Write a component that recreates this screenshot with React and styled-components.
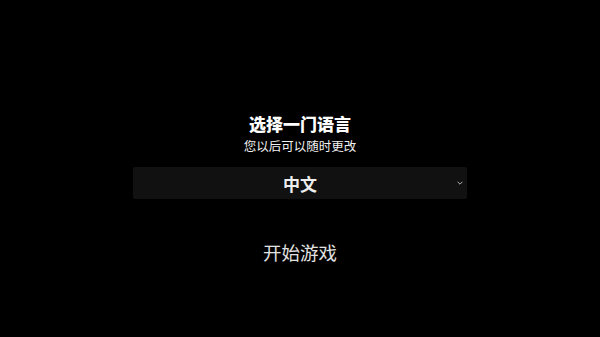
import React from "react";
import styled, { createGlobalStyle } from "styled-components";

const GlobalStyle = createGlobalStyle`
  html, body {
    margin: 0;
    padding: 0;
    background: #000;
    height: 100%;
  }
  body {
    font-family: "Noto Sans CJK SC", "Noto Sans", sans-serif;
    color: #fff;
  }
`;

function App() {
  return (
    <>
      <GlobalStyle />
      <Screen>
        <Header>
          <Title>选择一门语言</Title>
          <Subtitle>您以后可以随时更改</Subtitle>
        </Header>
        <Select>
          <SelectValue>中文</SelectValue>
          <Chevron viewBox="0 0 10 6">
            <path d="M1 1 L5 5 L9 1" />
          </Chevron>
        </Select>
        <StartButton>开始游戏</StartButton>
      </Screen>
    </>
  );
}

const Screen = styled.div`
  width: 600px;
  height: 337px;
  box-sizing: border-box;
  padding-top: 112px;
  display: flex;
  flex-direction: column;
  align-items: center;
  background: #000;
`;

const Header = styled.div`
  display: flex;
  flex-direction: column;
  align-items: center;
`;

const Title = styled.h1`
  margin: 0;
  font-size: 17px;
  font-weight: 900;
  line-height: 24px;
  color: #fff;
`;

const Subtitle = styled.p`
  margin: 0;
  font-size: 12.5px;
  line-height: 20px;
  color: #f0f0f0;
`;

const Select = styled.div`
  position: relative;
  margin-top: 11px;
  width: 334px;
  height: 32px;
  background: #111;
  border-radius: 2px;
  display: flex;
  align-items: center;
  justify-content: center;
`;

const SelectValue = styled.span`
  font-size: 17px;
  font-weight: 600;
  color: #eee;
`;

const Chevron = styled.svg`
  position: absolute;
  right: 4px;
  top: 14px;
  width: 6px;
  height: 4px;
  fill: none;
  stroke: #bbb;
  stroke-width: 1.6;
`;

const StartButton = styled.button`
  margin-top: 40px;
  background: none;
  border: none;
  padding: 0;
  font-family: inherit;
  font-size: 18.5px;
  font-weight: 400;
  color: #e2e2e2;
  line-height: 26px;
  cursor: pointer;
`;

export default App;
